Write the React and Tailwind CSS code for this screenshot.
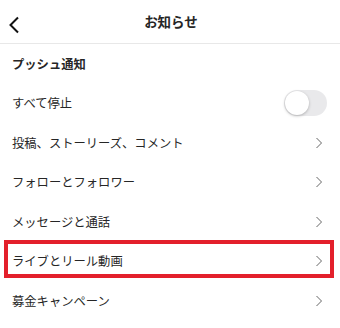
const ROWS = [
  "投稿、ストーリーズ、コメント",
  "フォローとフォロワー",
  "メッセージと通話",
  "ライブとリール動画",
  "募金キャンペーン",
];

function Chevron() {
  return (
    <svg width="8" height="12" viewBox="0 0 8 12" fill="none">
      <path d="M1.5 1 L6.5 6 L1.5 11" stroke="#666" strokeWidth="1" />
    </svg>
  );
}

export default function App() {
  return (
    <div
      className="w-[340px] h-[328px] bg-white overflow-hidden text-[#262626]"
      style={{ fontFamily: '"Noto Sans CJK JP", "Noto Sans", sans-serif' }}
    >
      {/* header */}
      <div className="relative h-[44px] flex items-center justify-center border-b border-[#e8e8e8]">
        <svg className="absolute left-[8px] top-[16px]" width="12" height="18" viewBox="0 0 12 18" fill="none">
          <path d="M10 1.5 L2.5 9 L10 16.5" stroke="#111" strokeWidth="2" />
        </svg>
        <span className="text-[13.5px] font-bold pl-[2px]">お知らせ</span>
      </div>

      <div className="h-[39.5px] flex items-center px-3">
        <span className="text-[12.3px] font-bold">プッシュ通知</span>
      </div>

      <div className="h-[39.5px] flex items-center justify-between pl-3 pr-[13px]">
        <span className="text-[12.3px]">すべて停止</span>
        <div className="w-[43px] h-[26px] rounded-full bg-[#e9e9eb] p-[1px] flex items-center">
          <div className="w-[24px] h-[24px] rounded-full bg-white shadow-[0_1px_3px_rgba(0,0,0,0.25)]" />
        </div>
      </div>

      {ROWS.map((label, i) => (
        <div key={label} className="relative h-[39.5px] flex items-center justify-between pl-3 pr-[17px]">
          <span className="text-[12.3px]">{label}</span>
          <Chevron />
          {i === 3 && (
            <div className="absolute left-[4px] right-[6px] top-[-2px] h-[38px] border-[4px] border-[#e3202b]" />
          )}
        </div>
      ))}
    </div>
  );
}
